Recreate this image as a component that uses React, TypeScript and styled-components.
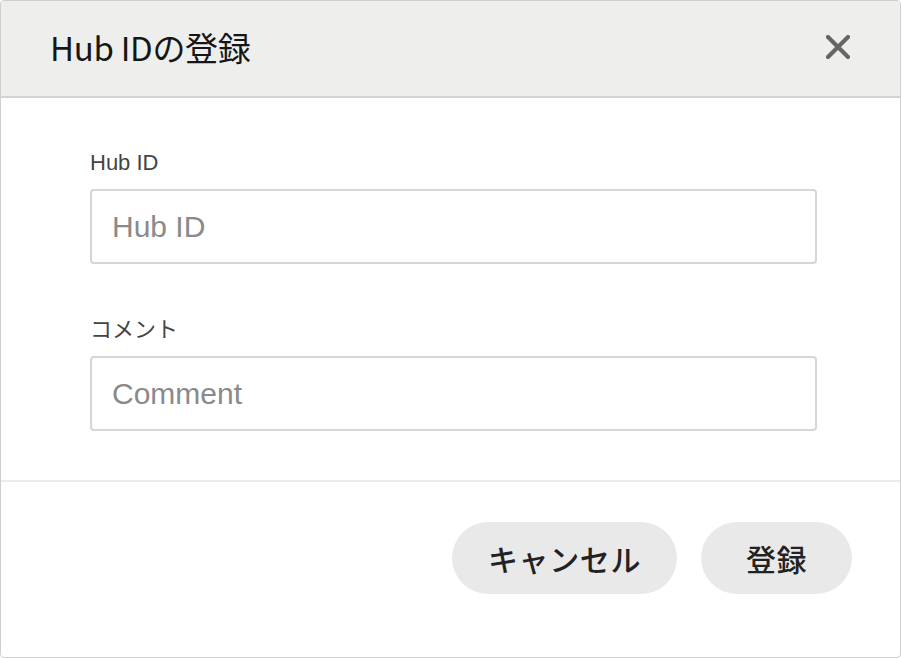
import React from 'react';
import styled, { createGlobalStyle } from 'styled-components';

const GlobalStyle = createGlobalStyle`
  html, body {
    margin: 0;
    padding: 0;
    background: #ffffff;
  }
  * {
    box-sizing: border-box;
  }
`;

const latin = `"Liberation Sans", "Noto Sans CJK JP", sans-serif`;
const cjk = `"Noto Sans CJK JP", "Liberation Sans", sans-serif`;

const CloseIcon = () => (
  <svg width="24" height="24" viewBox="0 0 24 24">
    <path d="M2 2 L22 22 M22 2 L2 22" stroke="#666666" strokeWidth="4.2" strokeLinecap="round" />
  </svg>
);

const App = () => {
  return (
    <>
      <GlobalStyle />
      <Dialog>
        <Header>
          <Title>Hub IDの登録</Title>
          <CloseButton aria-label="close">
            <CloseIcon />
          </CloseButton>
        </Header>

        <Body>
          <Field>
            <Label>Hub ID</Label>
            <Input placeholder="Hub ID" />
          </Field>
          <Field>
            <Label>コメント</Label>
            <Input placeholder="Comment" />
          </Field>
        </Body>

        <Footer>
          <ActionButton>キャンセル</ActionButton>
          <ActionButton>登録</ActionButton>
        </Footer>
      </Dialog>
    </>
  );
};

const Dialog = styled.div`
  width: 901px;
  height: 658px;
  border: 1px solid #cfcfcf;
  border-radius: 4px;
  overflow: hidden;
  background: #ffffff;
  display: flex;
  flex-direction: column;
`;

const Header = styled.div`
  height: 97px;
  flex-shrink: 0;
  display: flex;
  align-items: center;
  justify-content: space-between;
  padding: 0 50px 3px 49px;
  background: #eeefed;
  border-bottom: 2px solid #d3d3d3;
`;

const Title = styled.h1`
  margin: 0;
  font-family: ${cjk};
  font-size: 33px;
  font-weight: 400;
  color: #161616;
  line-height: 1;
  letter-spacing: -0.3px;
`;

const CloseButton = styled.button`
  border: none;
  background: transparent;
  padding: 0;
  width: 24px;
  height: 24px;
  display: flex;
  cursor: pointer;
`;

const Body = styled.div`
  display: flex;
  flex-direction: column;
  gap: 52px;
  padding: 51px 83px 49px 89px;
  border-bottom: 2px solid #ebebeb;
`;

const Field = styled.div`
  display: flex;
  flex-direction: column;
  gap: 12px;
`;

const Label = styled.label`
  font-family: ${latin};
  font-size: 22px;
  line-height: 28px;
  color: #444444;
`;

const Input = styled.input`
  height: 75px;
  width: 100%;
  border: 2px solid #d6d6d6;
  border-radius: 4px;
  padding: 0 20px;
  font-family: ${latin};
  font-size: 30px;
  color: #222222;
  outline: none;

  &::placeholder {
    color: #8a8a8a;
  }
`;

const Footer = styled.div`
  display: flex;
  justify-content: flex-end;
  gap: 24px;
  padding: 40px 48px 0 0;
`;

const ActionButton = styled.button`
  height: 72px;
  min-width: 151px;
  padding: 0 36px;
  border: none;
  border-radius: 36px;
  background: #e9e9e9;
  font-family: ${cjk};
  font-size: 30px;
  font-weight: 500;
  letter-spacing: 0.6px;
  color: #222222;
  cursor: pointer;
`;

export default App;
